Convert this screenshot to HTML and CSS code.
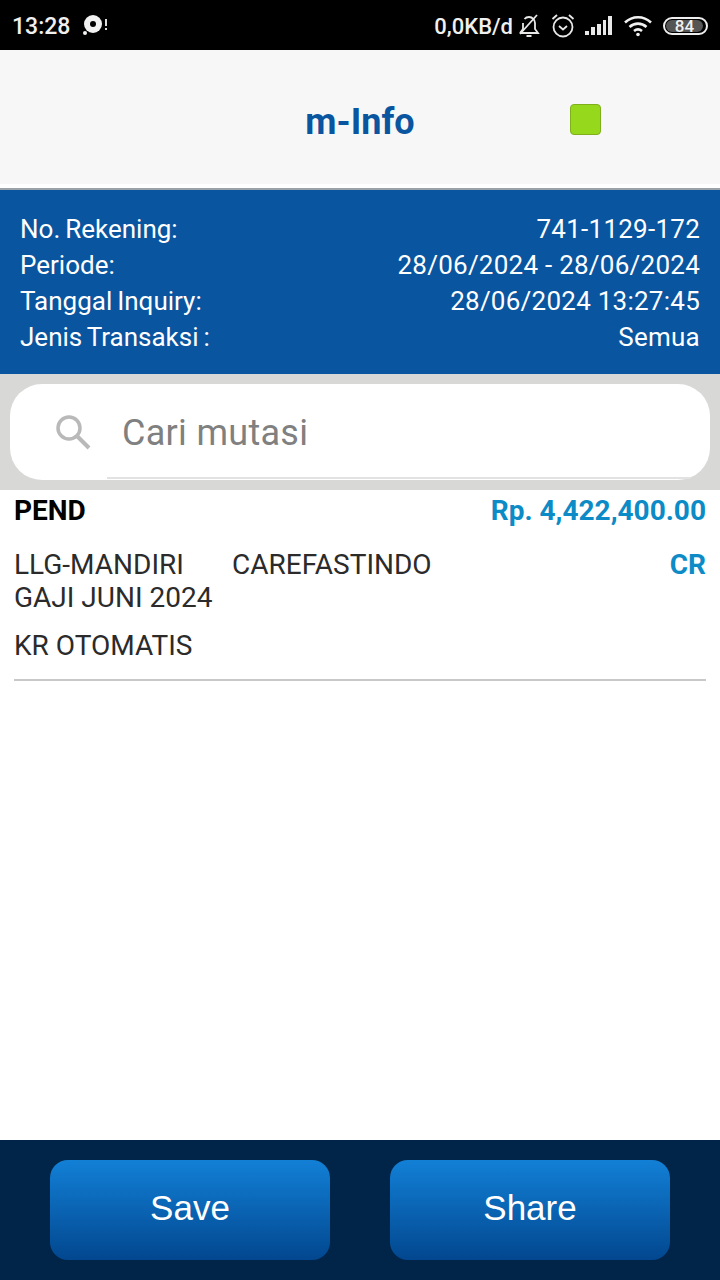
FILE: index.html
```html
<!DOCTYPE html>
<html lang="en">
<head>
    <meta charset="UTF-8">
    <meta name="viewport" content="width=device-width, initial-scale=1.0">
    <title>m-Info</title>
    <link rel="stylesheet" href="styles.css">
</head>
<body>
    <div class="page">
        <div class="status-bar">
            <div class="status-left">
                <span class="clock">13:28</span>
                <svg class="notif-icon" width="26" height="24" viewBox="0 0 26 24">
                    <circle cx="11" cy="10" r="9" fill="#f2f2f2"/>
                    <circle cx="11" cy="10" r="3" fill="#000"/>
                    <circle cx="3" cy="19" r="2" fill="#f2f2f2"/>
                    <rect x="23" y="5" width="2" height="7" fill="#ddd"/>
                    <rect x="23" y="14" width="2" height="2" fill="#ddd"/>
                </svg>
            </div>
            <div class="status-right">
                <span class="speed">0,0KB/d</span>
                <svg class="bell-icon" width="22" height="26" viewBox="0 0 22 26" fill="none" stroke="#e8e8e8" stroke-width="1.8">
                    <path d="M2 20h18l-3-4V10c0-3-2.500-6-6-6-2 0-3.500.8-4.500 2M5 10v6l-3 4"/>
                    <path d="M2 21 19 2"/>
                    <path d="M8.500 23h5" stroke-width="2"/>
                </svg>
                <svg class="alarm-icon" width="24" height="26" viewBox="0 0 24 26" fill="none" stroke="#e8e8e8" stroke-width="1.800">
                    <circle cx="12" cy="14" r="9.500"/>
                    <path d="M8 13l4 3.500 4-3.500"/>
                    <path d="M1.500 6 6 2M22.500 6 18 2"/>
                </svg>
                <svg class="signal-icon" width="28" height="20" viewBox="0 0 28 20" fill="#e8e8e8">
                    <rect x="0" y="15" width="4" height="4"/>
                    <rect x="6" y="11" width="4" height="8"/>
                    <rect x="12" y="8" width="4" height="11"/>
                    <rect x="18" y="4" width="3" height="15"/>
                    <rect x="23" y="0" width="4" height="19"/>
                </svg>
                <svg class="wifi-icon" width="28" height="22" viewBox="0 0 28 22" fill="none" stroke="#f2f2f2" stroke-width="2.600">
                    <path d="M1 7.500c7.500-7 18.500-7 26 0"/>
                    <path d="M5.500 12c5-4.500 12-4.500 17 0"/>
                    <path d="M10 16c2.400-2 5.600-2 8 0"/>
                    <circle cx="14" cy="19.500" r="1.800" fill="#f2f2f2" stroke="none"/>
                </svg>
                <div class="battery"><span class="battery-fill">84</span></div>
            </div>
        </div>

        <div class="app-header">
            <span></span>
            <h1 class="app-title">m-Info</h1>
            <div class="status-square"></div>
        </div>

        <div class="account-info">
            <div class="info-row"><span class="info-label">No. Rekening:</span><span class="info-value">741-1129-172</span></div>
            <div class="info-row"><span class="info-label">Periode:</span><span class="info-value">28/06/2024 - 28/06/2024</span></div>
            <div class="info-row"><span class="info-label">Tanggal Inquiry:</span><span class="info-value">28/06/2024 13:27:45</span></div>
            <div class="info-row"><span class="info-label">Jenis Transaksi :</span><span class="info-value">Semua</span></div>
        </div>

        <div class="search-wrap">
            <div class="search-box">
                <svg class="search-icon" width="38" height="38" viewBox="0 0 38 38" fill="none" stroke="#b9b9b9">
                    <circle cx="15" cy="15" r="11" stroke-width="3.500"/>
                    <path d="M23 23 35 35" stroke-width="4"/>
                </svg>
                <div class="search-field">Cari mutasi</div>
            </div>
        </div>

        <div class="mutation-list">
            <div class="mutation">
                <div class="mutation-top">
                    <span class="pend">PEND</span>
                    <span class="amount">Rp. 4,422,400.00</span>
                </div>
                <div class="mutation-desc">
                    <div class="desc-text">
                        <div class="desc-first"><span class="desc-bank">LLG-MANDIRI</span><span>CAREFASTINDO</span></div>
                        <div>GAJI JUNI 2024</div>
                    </div>
                    <span class="cr">CR</span>
                </div>
                <div class="mutation-note">KR OTOMATIS</div>
            </div>
        </div>

        <div class="footer">
            <button class="footer-btn">Save</button>
            <button class="footer-btn">Share</button>
        </div>
    </div>
</body>
</html>
```

FILE: styles.css
```css
* {
    box-sizing: border-box;
}
body {
    margin: 0;
    font-family: Roboto, "Liberation Sans", sans-serif;
    background-color: white;
}
.page {
    display: flex;
    flex-direction: column;
    width: 720px;
    height: 1280px;
    overflow: hidden;
}

/* status bar */
.status-bar {
    display: flex;
    justify-content: space-between;
    align-items: center;
    height: 50px;
    padding: 2px 12px 0 12px;
    background-color: black;
    color: #f0f0f0;
}
.status-left {
    display: flex;
    align-items: center;
    gap: 12px;
}
.clock {
    font-size: 23px;
    font-weight: 500;
}
.status-right {
    display: flex;
    align-items: center;
}
.speed {
    font-size: 22px;
    font-weight: 500;
    margin-right: 5px;
}
.alarm-icon {
    margin-left: 11px;
}
.signal-icon {
    margin-left: 10px;
}
.wifi-icon {
    margin-left: 11px;
}
.battery {
    width: 45px;
    height: 18px;
    margin-left: 11px;
    padding: 1px;
    border: 2px solid #eee;
    border-radius: 9px;
}
.battery-fill {
    display: block;
    width: 37px;
    height: 12px;
    background-color: #555;
    border-radius: 6px;
    color: #f2f2f2;
    font-size: 17px;
    font-weight: 500;
    line-height: 12px;
    text-align: center;
}

/* header */
.app-header {
    display: grid;
    grid-template-columns: 1fr auto 1fr;
    align-items: center;
    height: 140px;
    padding-top: 1px;
    background-color: #f7f7f8;
    border-bottom: 2px solid #9ba3aa;
    box-shadow: inset 0 -4px 0 white;
}
.app-title {
    margin: 0;
    padding-top: 5px;
    color: #0a559f;
    font-size: 36px;
    font-weight: 700;
}
.status-square {
    width: 31px;
    height: 31px;
    margin-left: 155px;
    background-color: #95d81c;
    border: 1px solid #7fb01c;
    border-radius: 4px;
}

/* account block */
.account-info {
    height: 184px;
    padding: 21px 20px 0;
    background-color: #0a559f;
    color: white;
    font-size: 26px;
    line-height: 36px;
}
.info-row {
    display: flex;
    justify-content: space-between;
}
.info-label {
    word-spacing: -1.5px;
}
.info-value {
    letter-spacing: 0.25px;
}

/* search */
.search-wrap {
    padding: 10px;
    background-color: #d8d8d6;
}
.search-box {
    display: flex;
    align-items: center;
    height: 96px;
    padding: 0 20px 0 44px;
    background-color: white;
    border-radius: 32px;
}
.search-field {
    display: flex;
    flex: 1;
    align-items: center;
    align-self: stretch;
    margin: 0 0 1px 15px;
    padding: 4px 0 0 15px;
    border-bottom: 2px solid #e2e2e2;
    color: #808080;
    font-size: 36px;
    letter-spacing: 0.3px;
}

/* list */
.mutation-list {
    flex: 1;
    padding: 0 14px;
    background-color: white;
}
.mutation {
    padding-bottom: 17px;
    border-bottom: 2px solid #c8c8c8;
    color: #2b2b2b;
    font-size: 28px;
}
.mutation-top {
    display: flex;
    justify-content: space-between;
    align-items: center;
    height: 41px;
    font-weight: 700;
}
.pend {
    color: black;
}
.amount {
    color: #0c8bc6;
}
.mutation-desc {
    display: flex;
    justify-content: space-between;
    margin-top: 17px;
    line-height: 33px;
}
.desc-bank {
    display: inline-block;
    width: 218px;
}
.cr {
    color: #0c8bc6;
    font-weight: 700;
}
.mutation-note {
    margin-top: 15px;
    line-height: 33px;
}

/* bottom buttons */
.footer {
    display: flex;
    justify-content: center;
    gap: 60px;
    height: 140px;
    padding-top: 20px;
    background-color: #012449;
}
.footer-btn {
    width: 280px;
    height: 100px;
    padding-bottom: 6px;
    border: none;
    border-radius: 18px;
    background: linear-gradient(#1280d6, #02478f);
    color: white;
    font-family: "Liberation Sans", sans-serif;
    font-size: 35px;
}
```
